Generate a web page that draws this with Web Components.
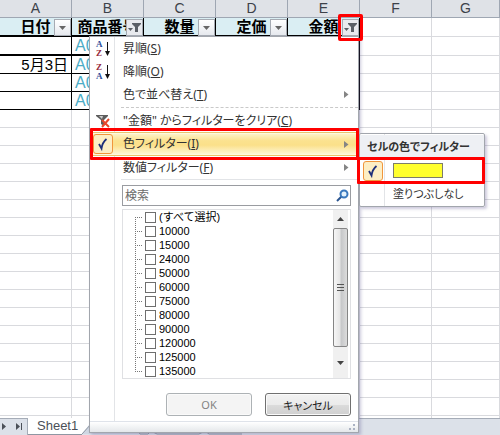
<!DOCTYPE html>
<html lang="ja">
<head>
<meta charset="utf-8">
<title>フィルター</title>
<style>
    body{
        margin: 0;
        font-family: "Noto Sans", "Noto Sans CJK JP", sans-serif;
        font-size: 12px;
        color: #333;
    }
</style>
</head>
<body>
<sheet-window>
    <filter-menu slot="menu"></filter-menu>
    <color-submenu slot="submenu"></color-submenu>
</sheet-window>

<script>
class FilterButton extends HTMLElement{
    constructor(){
        super();
        this.attachShadow({mode: "open"});
        const active = this.hasAttribute('active');
        this.shadowRoot.innerHTML = `
        <style>
            :host{
                display: block;
                position: absolute;
                right: 0;
                top: 1px;
                width: 17px;
                height: 17px;
            }
            :host([marked]){
                z-index: 2;
            }
            button{
                display: block;
                width: 100%;
                height: 100%;
                padding: 0;
                border: 1px solid #a6abb3;
                background: linear-gradient(#fff, #e6e9ee);
            }
            :host([active]) button{
                background: #e8eaee;
            }
            svg{
                display: block;
            }
            :host([marked])::after{
                content: "";
                position: absolute;
                left: -4px;
                top: -5px;
                right: -4px;
                bottom: -5px;
                border: 3px solid #f00;
                border-radius: 2px;
            }
        </style>
        <button aria-label="フィルター">
            <svg width="15" height="15" viewBox="0 0 15 15" fill="#5a5f66">
            ${active
                ? '<path d="M5 3h9v1l-3 3v5H8V7L5 4z"/><path d="M1 8h5l-2.500 3z"/>'
                : '<path d="M4 6h7l-3.500 4z" fill="#666"/>'}
            </svg>
        </button>
        `;
    }
}

class SheetGrid extends HTMLElement{
    constructor(){
        super();
        this.attachShadow({mode: "open"});
        this.shadowRoot.innerHTML = `
        <style>
            :host{
                display: block;
                overflow: hidden;
                background: #fff;
            }
            table{
                width: 100%;
                table-layout: fixed;
                border-spacing: 0;
                font-family: "Liberation Sans", "Noto Sans CJK JP", sans-serif;
            }
            col{
                width: 72px;
            }
            col:last-child{
                width: auto;
            }
            th, td{
                box-sizing: border-box;
                height: 18px;
                padding: 0;
                border-right: 1px solid #d9dade;
                border-bottom: 1px solid #d9dade;
                line-height: 17px;
                white-space: nowrap;
            }
            thead th{
                background: #dfe2e7;
                border-color: #9fa7b3;
                font-size: 14px;
                font-weight: normal;
                color: #3c4149;
            }
            .names td, .names th{
                height: 19px;
            }
            .names th{
                position: relative;
                background: #daeef3;
                border-right-color: #000;
                border-bottom: 2px solid #000;
                font-size: 15px;
                color: #000;
            }
            .tall td{
                height: 19px;
            }
            .data td:nth-child(-n+5){
                border-bottom-color: #000;
            }
            .tall td:nth-child(-n+5){
                border-bottom-width: 2px;
            }
            .data td:nth-child(1), .data td:nth-child(5){
                border-right-color: #000;
            }
            .date{
                padding-right: 3px;
                text-align: right;
                font-size: 15px;
                color: #000;
            }
            .code{
                padding-left: 3px;
                font-size: 16px;
                color: #4bacc6;
            }
        </style>
        <table>
            <colgroup><col><col><col><col><col><col><col></colgroup>
            <thead>
                <tr><th>A</th><th>B</th><th>C</th><th>D</th><th>E</th><th>F</th><th>G</th></tr>
            </thead>
            <tbody>
                <tr class="names">
                    <th>日付<filter-button></filter-button></th>
                    <th>商品番号<filter-button active></filter-button></th>
                    <th>数量<filter-button></filter-button></th>
                    <th>定価<filter-button></filter-button></th>
                    <th>金額<filter-button active marked></filter-button></th>
                    <td></td><td></td>
                </tr>
            </tbody>
        </table>
        `;
        const body = this.shadowRoot.querySelector('tbody');
        const dates = ['', '5月3日', '', ''];
        for(let i = 0; i < 22; i++){
            const row = document.createElement('tr');
            if(i < 4) row.classList.add('data');
            if(i === 0) row.classList.add('tall');
            row.innerHTML = '<td></td>'.repeat(7);
            if(i < 4){
                row.cells[0].className = 'date';
                row.cells[0].textContent = dates[i];
                row.cells[1].className = 'code';
                row.cells[1].textContent = 'A0';
            }
            body.appendChild(row);
        }
    }
}

class SheetTabs extends HTMLElement{
    constructor(){
        super();
        this.attachShadow({mode: "open"});
        this.shadowRoot.innerHTML = `
        <style>
            :host{
                display: flex;
                height: 17px;
                background: #dce1e9;
                box-shadow: inset 0 1px #a5acb7;
            }
            .nav{
                display: flex;
                align-items: center;
                gap: 8px;
                width: 28px;
                box-sizing: border-box;
                border-right: 1px solid #a5acb7;
            }
            .nav button{
                padding: 0;
                border: 0;
                background: none;
            }
            svg{
                display: block;
            }
            .tab{
                padding: 0 4px 0 9px;
                border: 0;
                border-bottom: 1px solid #8f97a3;
                background: #fff;
                font: 13px/16px "Liberation Sans", sans-serif;
                color: #4b5058;
            }
            .rest{
                flex: none;
            }
        </style>
        <div class="nav">
            <button aria-label="次のシート"><svg width="8" height="9" viewBox="0 0 8 9"><path d="M2 1l4 3.500l-4 3.500z" fill="#4b5058"/></svg></button>
            <button aria-label="最後のシート"><svg width="8" height="9" viewBox="0 0 8 9"><path d="M0 1l4 3.500l-4 3.500zM5 1h1v7H5z" fill="#4b5058"/></svg></button>
        </div>
        <button class="tab">Sheet1</button>
        <svg class="rest" width="160" height="17" viewBox="0 0 160 17">
            <path d="M0 0h12L0 16z" fill="#fff"/>
            <path d="M0 16l10-11h40l8 11h8l3-3l6 3h42l6-3l4 3h33" fill="#cfd6e2" stroke="#8f97a3"/>
        </svg>
        `;
    }
}

class MenuItem extends HTMLElement{
    constructor(){
        super();
        this.attachShadow({mode: "open"});
        this.shadowRoot.innerHTML = `
        <style>
            :host{
                display: block;
                position: relative;
            }
            button{
                display: grid;
                grid-template-columns: 25px 1fr 14px;
                align-items: center;
                width: 100%;
                height: 23px;
                padding: 0;
                border: 0;
                background: none;
                font: inherit;
                font-feature-settings: "palt";
                line-height: 18px;
                color: inherit;
                text-align: left;
                white-space: nowrap;
            }
            .icon{
                display: flex;
                justify-content: center;
            }
            .label{
                padding-left: 8px;
            }
            .arrow{
                display: none;
            }
            :host([sub]) .arrow{
                display: block;
            }
            :host([checked]) button{
                height: 24px;
                border-top: 1px solid #e9c46a;
                border-bottom: 1px solid #e9c46a;
                background: linear-gradient(#fdf4cf, #fbe28f 35%, #fbe08a 55%, #fef8dd);
                box-shadow: inset 0 1px #fff8e0, inset 0 -1px #fff8e0;
            }
            :host([marked])::after{
                content: "";
                position: absolute;
                left: 0;
                top: -4px;
                right: -1px;
                bottom: -4px;
                border: 3px solid #f00;
                border-radius: 1px;
                pointer-events: none;
                z-index: 1;
            }
        </style>
        <button>
            <span class="icon"><slot name="icon"></slot></span>
            <span class="label"><slot></slot></span>
            <svg class="arrow" width="5" height="7" viewBox="0 0 5 7"><path d="M0 0l4.500 3.500l-4.500 3.500z" fill="#858585"/></svg>
        </button>
        `;
    }
}

class CheckMark extends HTMLElement{
    constructor(){
        super();
        this.attachShadow({mode: "open"});
        this.shadowRoot.innerHTML = `
        <style>
            :host{
                display: block;
                box-sizing: border-box;
                width: 20px;
                height: 20px;
                border: 1px solid #f0963c;
                border-radius: 3px;
                background: #fdeec4;
            }
            svg{
                display: block;
            }
        </style>
        <svg width="18" height="18" viewBox="0 0 18 18"><path d="M5 9l2.500 4.500C8 10 9.500 6.500 12.500 4" fill="none" stroke="#1f2f7a" stroke-width="1.800"/></svg>
        `;
    }
}

class ValueList extends HTMLElement{
    constructor(){
        super();
        this.attachShadow({mode: "open"});
        this.shadowRoot.innerHTML = `
        <style>
            :host{
                display: flex;
                justify-content: space-between;
                border: 1px solid #dfe0e3;
                background: #fff;
                color: #000;
            }
            ul{
                position: relative;
                margin: 0;
                padding: 0 0 0 12px;
                list-style: none;
                font: 11px/14px "Liberation Sans", "Noto Sans CJK JP", sans-serif;
            }
            ul::before{
                content: "";
                position: absolute;
                left: 12px;
                top: 7px;
                bottom: 6px;
                border-left: 1px dotted #777;
            }
            label{
                display: flex;
                align-items: center;
                height: 14px;
                gap: 3px;
                white-space: nowrap;
            }
            label::before{
                content: "";
                width: 7px;
                border-top: 1px dotted #777;
            }
            input{
                appearance: none;
                box-sizing: border-box;
                width: 11px;
                height: 11px;
                margin: 0;
                border: 1px solid #6e6e6e;
                background: #fff;
            }
            .scroll{
                display: flex;
                flex-direction: column;
                width: 15px;
                margin-right: 2px;
                background: #f0f0f0;
            }
            .scroll button{
                display: flex;
                align-items: center;
                justify-content: center;
                height: 18px;
                padding: 0;
                border: 0;
                background: none;
            }
            .scroll button:last-child{
                height: 31px;
            }
            .thumb{
                display: flex;
                align-items: center;
                justify-content: center;
                flex: 1;
                box-sizing: border-box;
                border: 1px solid #858585;
                border-radius: 2px;
                background: linear-gradient(90deg, #f6f6f6, #e6e6e6 45%, #c6c7c9 55%, #dcdcdc);
            }
        </style>
        <ul></ul>
        <div class="scroll">
            <button aria-label="上へ"><svg width="7" height="4" viewBox="0 0 7 4"><path d="M0 4l3.500-4l3.500 4z" fill="#444"/></svg></button>
            <div class="thumb"><svg width="7" height="9" viewBox="0 0 7 9"><path d="M0 1.500h7M0 4.500h7M0 7.500h7" stroke="#555"/></svg></div>
            <button aria-label="下へ"><svg width="7" height="4" viewBox="0 0 7 4"><path d="M0 0l3.500 4l3.500-4z" fill="#444"/></svg></button>
        </div>
        `;
        const list = this.shadowRoot.querySelector('ul');
        const values = ['(すべて選択)', 10000, 15000, 24000, 50000, 60000, 75000, 80000, 90000, 120000, 125000, 135000];
        values.forEach(value => {
            const item = document.createElement('li');
            item.innerHTML = `<label><input type="checkbox">${value}</label>`;
            list.appendChild(item);
        });
    }
}

class FilterMenu extends HTMLElement{
    constructor(){
        super();
        this.attachShadow({mode: "open"});
        this.shadowRoot.innerHTML = `
        <style>
            :host{
                display: block;
                box-sizing: border-box;
                width: 270px;
                border: 1px solid #a2a6ad;
                background: linear-gradient(90deg, #fff 24px, #e2e4e7 24px, #e2e4e7 25px, #fff 25px);
                box-shadow: 2px 2px 3px rgba(90, 80, 140, .3);
            }
            hr{
                margin: 1px 0 1px 31px;
                border: 0;
                border-top: 1px dashed #c9c9c9;
            }
            hr.solid{
                margin: 0 0 5px 31px;
                border-top: 1px solid #e2e4e7;
            }
            .fields{
                padding: 0 7px 0 32px;
            }
            .search{
                display: flex;
                align-items: center;
                box-sizing: border-box;
                height: 21px;
                margin-bottom: 3px;
                border: 1px solid #9a9ca1;
                background: #fff;
            }
            .search input{
                flex: 1;
                min-width: 0;
                padding: 0 0 0 2px;
                border: 0;
                outline: 0;
                background: none;
                font: inherit;
            }
            .search input::placeholder{
                color: #6a6a6a;
                opacity: 1;
            }
            .search button{
                padding: 0 1px;
                border: 0;
                background: none;
            }
            .buttons{
                display: flex;
                justify-content: flex-end;
                gap: 13px;
                padding: 14px 0 5px;
            }
            .buttons button{
                width: 86px;
                height: 23px;
                padding: 0;
                border: 1px solid #707070;
                border-radius: 3px;
                background: linear-gradient(#f2f2f2, #ebebeb 50%, #dcdcdc 50%, #cfcfcf);
                box-shadow: inset 0 0 0 1px #fafafa;
                font: inherit;
                font-size: 11px;
                font-feature-settings: "palt";
                color: #222;
            }
            .buttons button:disabled{
                border-color: #adb2b5;
                background: #f4f4f4;
                color: #838383;
            }
            footer{
                display: flex;
                justify-content: flex-end;
                height: 10px;
                border-top: 1px solid #dfe3ea;
                background: linear-gradient(#fff, #e4e7ea);
            }
            svg{
                display: block;
            }
            text{
                font: bold 9px "Liberation Serif", serif;
            }
        </style>
        <menu-item><svg slot="icon" width="16" height="17" viewBox="0 0 16 17"><text x="1" y="7" fill="#2f4f9b">A</text><text x="1" y="16" fill="#96293a">Z</text><path d="M12.500 2v11" stroke="#111"/><path d="M10 11h5l-2.500 5z" fill="#111"/></svg>昇順(<u>S</u>)</menu-item>
        <menu-item><svg slot="icon" width="16" height="17" viewBox="0 0 16 17"><text x="1" y="7" fill="#96293a">Z</text><text x="1" y="16" fill="#2f4f9b">A</text><path d="M12.500 2v11" stroke="#111"/><path d="M10 11h5l-2.500 5z" fill="#111"/></svg>降順(<u>O</u>)</menu-item>
        <menu-item sub>色で並べ替え(<u>T</u>)</menu-item>
        <hr>
        <menu-item><svg slot="icon" width="16" height="14" viewBox="0 0 16 14"><path d="M1 1h12v1L9 6v6l-3-2V6L1 2z" fill="#5d5d5d"/><path d="M4 2h4L7 5z" fill="#ccc"/><path d="M7 6l7 7M14 5l-7 8" stroke="#e8472b" stroke-width="2"/></svg>"金額" からフィルターをクリア(<u>C</u>)</menu-item>
        <menu-item sub checked marked><check-mark slot="icon"></check-mark>色フィルター(<u>I</u>)</menu-item>
        <menu-item sub>数値フィルター(<u>F</u>)</menu-item>
        <hr class="solid">
        <div class="fields">
            <div class="search">
                <input type="text" placeholder="検索" aria-label="検索">
                <button aria-label="検索を実行"><svg width="13" height="13" viewBox="0 0 13 13"><path d="M1 12l5-5" stroke="#2b5590" stroke-width="2"/><circle cx="8" cy="5" r="3.500" fill="#e4f2fc" stroke="#3a78bd" stroke-width="2"/></svg></button>
            </div>
            <value-list></value-list>
            <div class="buttons">
                <button disabled>OK</button>
                <button>キャンセル</button>
            </div>
        </div>
        <footer><svg width="10" height="10" viewBox="0 0 10 10" fill="#aab2c3"><path d="M5 2h2v2H5zM5 6h2v2H5zM1 6h2v2H1z"/></svg></footer>
        `;
    }
}

class ColorSubmenu extends HTMLElement{
    constructor(){
        super();
        this.attachShadow({mode: "open"});
        this.shadowRoot.innerHTML = `
        <style>
            :host{
                display: block;
                box-sizing: border-box;
                width: 126px;
                padding: 1px 0;
                border: 1px solid #a2a6ad;
                border-radius: 2px;
                background: linear-gradient(90deg, #fff 24px, #e2e4e7 24px, #e2e4e7 25px, #fff 25px);
                box-shadow: 2px 2px 3px rgba(90, 80, 140, .3);
                font-size: 11px;
            }
            h2{
                margin: 0;
                padding: 3px 0 3px 7px;
                background: #eef0f4;
                font-size: 11px;
                line-height: 18px;
                font-feature-settings: "palt";
                white-space: nowrap;
            }
            .swatch{
                display: block;
                box-sizing: border-box;
                width: 50px;
                height: 15px;
                border: 1px solid #7d7d6a;
                background: #ffff2e;
            }
            .row{
                position: relative;
            }
            .row::after{
                content: "";
                position: absolute;
                left: -3px;
                top: -2px;
                right: -1px;
                bottom: -2px;
                border: 3px solid #f00;
                border-radius: 1px;
                pointer-events: none;
            }
        </style>
        <h2>セルの色でフィルター</h2>
        <div class="row">
            <menu-item><check-mark slot="icon"></check-mark><span class="swatch" role="img" aria-label="黄"></span></menu-item>
        </div>
        <menu-item>塗りつぶしなし</menu-item>
        `;
    }
}

class SheetWindow extends HTMLElement{
    constructor(){
        super();
        this.attachShadow({mode: "open"});
        this.shadowRoot.innerHTML = `
        <style>
            :host{
                display: flex;
                flex-direction: column;
                position: relative;
                height: 100vh;
                overflow: hidden;
            }
            sheet-grid{
                flex: 1;
                min-height: 0;
            }
            sheet-tabs{
                flex: none;
            }
            ::slotted(*){
                position: absolute;
            }
            ::slotted([slot="menu"]){
                left: 89px;
                top: 36px;
            }
            ::slotted([slot="submenu"]){
                left: 359px;
                top: 133px;
            }
        </style>
        <sheet-grid></sheet-grid>
        <sheet-tabs></sheet-tabs>
        <slot name="menu"></slot>
        <slot name="submenu"></slot>
        `;
    }
}

customElements.define('filter-button', FilterButton);
customElements.define('sheet-grid', SheetGrid);
customElements.define('sheet-tabs', SheetTabs);
customElements.define('check-mark', CheckMark);
customElements.define('menu-item', MenuItem);
customElements.define('value-list', ValueList);
customElements.define('filter-menu', FilterMenu);
customElements.define('color-submenu', ColorSubmenu);
customElements.define('sheet-window', SheetWindow);
</script>
</body>
</html>
